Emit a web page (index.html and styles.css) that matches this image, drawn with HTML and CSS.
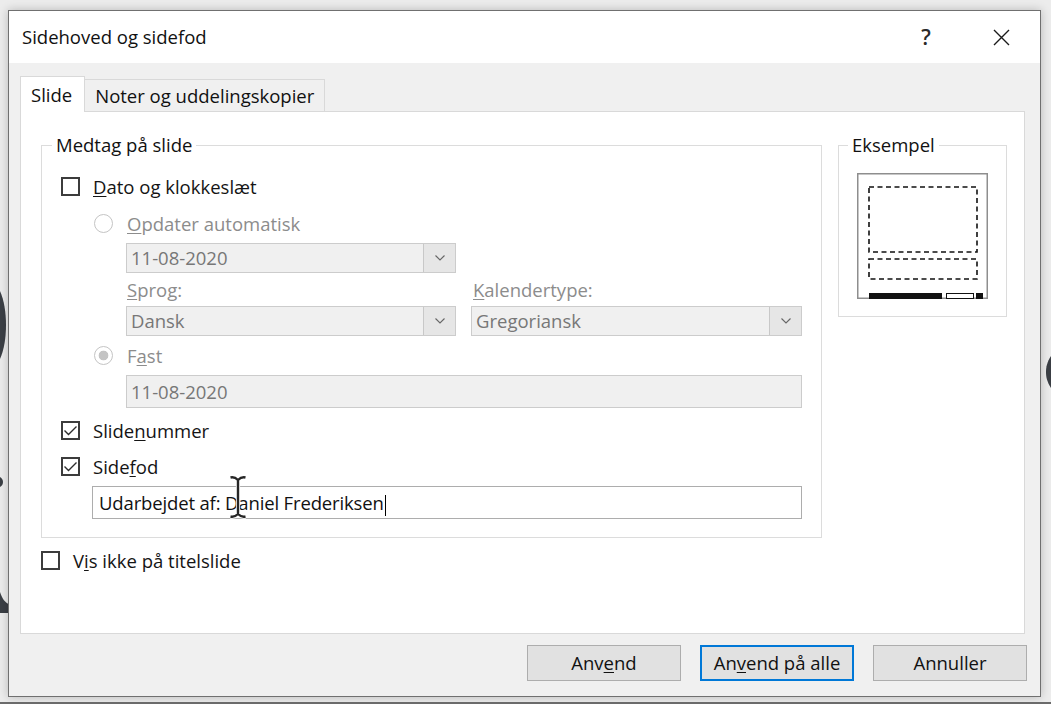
FILE: index.html
```html
<!DOCTYPE html>
<html lang="da">
<head>
<meta charset="utf-8">
<title>Sidehoved og sidefod</title>
<link rel="stylesheet" href="styles.css">
</head>
<body>
<div class="screen">
  <svg class="backdrop" viewBox="0 0 1051 704" width="1051" height="704" aria-hidden="true">
    <path d="M0 291 C4 300 6 312 6 325 C6 338 4 350 0 359 Z"/>
    <path d="M0 477 C2 478 3 480 3 482 C3 484 2 486 0 487 Z"/>
    <path d="M0 592 C2 598 5 603 9 604 L9 613 L0 613 Z"/>
    <path d="M1051 356 C1047 362 1046 367 1046 372 C1046 377 1047 382 1051 388 Z"/>
  </svg>
  <div class="dialog">
    <div class="titlebar">
      <span class="title">Sidehoved og sidefod</span>
      <span class="help">?</span>
      <svg class="close" viewBox="0 0 17 17"><path d="M1 1L16 16M16 1L1 16"/></svg>
    </div>
    <div class="body">
      <div class="tabs">
        <div class="tab tab-active">Slide</div>
        <div class="tab">Noter og uddelingskopier</div>
      </div>
      <div class="panel">
        <div class="groups">
          <div class="group group-main">
            <span class="legend">Medtag på slide</span>
            <div class="row r-dato"><span class="check"></span><span><u>D</u>ato og klokkeslæt</span></div>
            <div class="row r-radio r-auto disabled"><span class="radio"></span><span><u>O</u>pdater automatisk</span></div>
            <div class="select sel-date"><span class="select-text">11-08-2020</span><span class="select-btn"><svg viewBox="0 0 10 6"><path d="M0.5 0.5L5 5L9.5 0.5"/></svg></span></div>
            <div class="pair labels disabled"><span class="lab-1"><u>S</u>prog:</span><span class="lab-2"><u>K</u>alendertype:</span></div>
            <div class="pair selects">
              <div class="select"><span class="select-text">Dansk</span><span class="select-btn"><svg viewBox="0 0 10 6"><path d="M0.5 0.5L5 5L9.5 0.5"/></svg></span></div>
              <div class="select"><span class="select-text">Gregoriansk</span><span class="select-btn"><svg viewBox="0 0 10 6"><path d="M0.5 0.5L5 5L9.5 0.5"/></svg></span></div>
            </div>
            <div class="row r-radio r-fast disabled"><span class="radio radio-on"></span><span>F<u>a</u>st</span></div>
            <div class="field field-fast">11-08-2020</div>
            <div class="row r-slnr"><span class="check"><svg viewBox="0 0 15 15"><path d="M1.5 7.5L5.5 11.5L13.5 3.5"/></svg></span><span>Slide<u>n</u>ummer</span></div>
            <div class="row r-sidefod"><span class="check"><svg viewBox="0 0 15 15"><path d="M1.5 7.5L5.5 11.5L13.5 3.5"/></svg></span><span>Side<u>f</u>od</span></div>
            <div class="field field-footer">Udarbejdet af: Daniel Frederiksen<span class="caret"></span>
              <svg class="ibeam" viewBox="0 0 18 44"><path class="ib-halo" d="M1.5 2.5 Q5.5 1.5 9 5 Q12.5 1.5 16.5 2.5 M9 5 V39 M1.5 41.5 Q5.5 42.5 9 39 Q12.5 42.5 16.5 41.5"/><path class="ib-line" d="M1.5 2.5 Q5.5 1.5 9 5 Q12.5 1.5 16.5 2.5 M9 5 V39 M1.5 41.5 Q5.5 42.5 9 39 Q12.5 42.5 16.5 41.5"/></svg>
            </div>
          </div>
          <div class="group group-preview">
            <span class="legend">Eksempel</span>
            <svg class="preview" viewBox="0 0 131 126" width="131" height="126">
              <rect class="pv-frame" x="0.75" y="0.75" width="129.5" height="124.5"/>
              <rect class="pv-dash" x="12" y="14" width="108" height="65"/>
              <rect class="pv-dash" x="12" y="86" width="108" height="20"/>
              <rect class="pv-fill" x="12" y="120" width="73" height="6"/>
              <rect class="pv-open" x="89.5" y="120.5" width="27" height="5"/>
              <rect class="pv-fill" x="119" y="120" width="7" height="6"/>
            </svg>
          </div>
        </div>
        <div class="row r-titel"><span class="check"></span><span>V<u>i</u>s ikke på titelslide</span></div>
      </div>
      <div class="buttons">
        <button class="btn" type="button">Anv<u>e</u>nd</button>
        <button class="btn btn-default" type="button">An<u>v</u>end på alle</button>
        <button class="btn" type="button">Annuller</button>
      </div>
    </div>
  </div>
</div>
</body>
</html>
```
FILE: styles.css
```css
* { box-sizing: border-box; }
html, body { margin: 0; padding: 0; }
body {
  font-family: "Open Sans", "Noto Sans", "DejaVu Sans", sans-serif;
  font-size: 18.5px;
  color: #141414;
  background: #ececec;
}
u { text-decoration-thickness: 1px; text-underline-offset: 2px; }

.screen {
  position: relative;
  width: 1051px;
  height: 704px;
  overflow: hidden;
  padding: 10px 0 0 8px;
  background: #ececec;
  border-bottom: 2px solid #6b6b6b;
}
.backdrop { position: absolute; left: 0; top: 0; fill: #3b3f45; }

.dialog {
  position: relative;
  z-index: 1;
  width: 1033px;
  height: 687px;
  border: 1px solid #707070;
  background: #f0f0f0;
  box-shadow: 0 0 9px rgba(0, 0, 0, 0.22);
  display: flex;
  flex-direction: column;
}

.titlebar {
  flex: none;
  height: 52px;
  background: #fff;
  display: flex;
  align-items: center;
  padding: 0 30px 0 13px;
}
.title { flex: 1; line-height: 52px; color: #111; }
.help { width: 30px; text-align: center; font-size: 21px; font-weight: 600; line-height: 52px; margin-right: 52px; color: #2a2a2a; }
.close { width: 17px; height: 17px; fill: none; stroke: #1a1a1a; stroke-width: 1.4; }

.body {
  flex: 1;
  display: flex;
  flex-direction: column;
  padding: 13px 15px 0 11px;
}

.tabs { display: flex; align-items: flex-end; height: 35px; flex: none; }
.tab {
  height: 32px;
  line-height: 25px;
  padding: 3px 10px;
  border: 1px solid #d9d9d9;
  border-bottom: none;
  border-left: none;
  background: #f0f0f0;
  color: #111;
}
.tab-active {
  position: relative;
  z-index: 1;
  height: 36px;
  padding: 5px 12px 5px 10px;
  border-left: 1px solid #d9d9d9;
  background: #fff;
  margin-bottom: -1px;
}

.panel {
  flex: none;
  height: 523px;
  border: 1px solid #d9d9d9;
  background: #fff;
  padding: 33px 17px 0 20px;
}
.groups { display: flex; gap: 16px; align-items: flex-start; }
.group {
  border: 1px solid #dcdcdc;
  display: flex;
  flex-direction: column;
}
.group-main { width: 781px; padding: 0 19px 18px 19px; }
.group-preview { width: 169px; padding: 0 0 17px 18px; }
.legend {
  align-self: flex-start;
  margin: -13px 0 0 -9px;
  padding: 0 4px;
  background: #fff;
  line-height: 24px;
  color: #111;
}

.row { display: flex; align-items: center; height: 24px; line-height: 25px; }
.disabled { color: #8c8c8c; }

.check {
  flex: none;
  width: 19px;
  height: 19px;
  border: 2px solid #3c3c3c;
  margin-right: 13px;
  display: flex;
  align-items: center;
  justify-content: center;
  background: #fff;
}
.check svg { width: 15px; height: 15px; fill: none; stroke: #2e2e2e; stroke-width: 1.4; }

.radio {
  flex: none;
  width: 19px;
  height: 19px;
  border-radius: 50%;
  border: 1px solid #c4c4c4;
  background: #fff;
  margin-right: 14px;
}
.radio-on { background: radial-gradient(circle, #c4c4c4 0 4.5px, #fff 5.2px); }

.r-dato { margin-top: 17px; }
.r-radio { padding-left: 33px; }
.r-auto { margin-top: 13px; }
.r-fast { margin-top: 7px; }
.r-slnr { margin-top: 10px; }
.r-sidefod { margin-top: 12px; }
.r-titel { margin-top: 10px; }

.select {
  display: flex;
  height: 30px;
  border: 1px solid #cccccc;
  background: #f0f0f0;
}
.select-text { flex: 1; padding-left: 4px; line-height: 28px; color: #777; }
.select-btn {
  flex: none;
  width: 32px;
  border-left: 1px solid #c8c8c8;
  background: #e6e6e6;
  display: flex;
  align-items: center;
  justify-content: center;
}
.select-btn svg { width: 10px; height: 6px; fill: none; stroke: #666; stroke-width: 1.1; }
.sel-date { margin: 8px 0 0 65px; width: 330px; }

.pair { display: grid; grid-template-columns: 330px 331px; column-gap: 15px; margin-left: 65px; }
.labels { margin-top: 4px; height: 24px; line-height: 25px; }
.lab-1 { padding-left: 1px; }
.lab-2 { padding-left: 2px; }
.selects { margin-top: 5px; }

.field {
  height: 33px;
  border: 1px solid #cccccc;
  background: #f0f0f0;
  line-height: 31px;
  padding-left: 4px;
  color: #777;
}
.field-fast { margin: 8px 0 0 65px; width: 676px; }
.field-footer {
  position: relative;
  margin: 8px 0 0 31px;
  width: 710px;
  background: #fff;
  border-color: #adadad;
  padding-left: 6px;
  color: #111;
  letter-spacing: -0.15px;
}
.caret { display: inline-block; width: 1px; height: 21px; background: #000; vertical-align: middle; margin-left: 1px; }
.ibeam { position: absolute; left: 136px; top: -12px; width: 18px; height: 44px; fill: none; }
.ib-halo { stroke: #fff; stroke-width: 4.2; }
.ib-line { stroke: #262626; stroke-width: 2.4; }

.preview { display: block; margin-top: 16px; }
.pv-frame { fill: #fff; stroke: #8e8e8e; stroke-width: 1.5; }
.pv-dash { fill: none; stroke: #111; stroke-width: 1.6; stroke-dasharray: 5 3.5; }
.pv-fill { fill: #111; }
.pv-open { fill: #fff; stroke: #111; stroke-width: 1; }

.buttons {
  display: flex;
  justify-content: flex-end;
  gap: 19px;
  margin: 11px -2px 0 0;
}
.btn {
  width: 154px;
  height: 36px;
  border: 1px solid #adadad;
  background: #e1e1e1;
  font-family: inherit;
  font-size: 18.5px;
  color: #111;
  padding: 0;
  line-height: 30px;
}
.btn-default { border: 2px solid #0078d7; }
```
